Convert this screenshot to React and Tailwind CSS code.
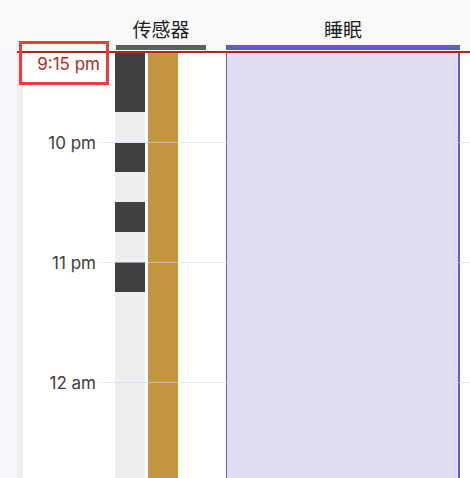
const HOURS = [
  { label: '10 pm', top: 91 },
  { label: '11 pm', top: 211 },
  { label: '12 am', top: 331 },
]

// sensor activity blocks, offsets from 9:15 pm at 2px per minute
const SENSOR_BLOCKS = [
  { top: 0, height: 60 },
  { top: 91, height: 29 },
  { top: 150, height: 30 },
  { top: 210, height: 30 },
]

const sans = { fontFamily: 'Inter, "Noto Sans CJK SC", sans-serif' }

function ColumnHeader({ title, width, bar }) {
  return (
    <div className="flex flex-col items-center justify-end" style={{ width }}>
      <span className="text-[19px] leading-none text-[#1c1c1c] mb-[5px]">{title}</span>
      <div className={`h-[5px] w-full ${bar}`} />
    </div>
  )
}

export default function App() {
  return (
    <div
      className="relative w-[470px] h-[478px] overflow-hidden bg-white"
      style={sans}
    >
      <header className="h-[51px] bg-[#f9f9f9] flex items-end pb-[1px]">
        <div className="w-[116px]" />
        <ColumnHeader title="传感器" width={90} bar="bg-[#5e5e5e]" />
        <div className="w-[20px]" />
        <ColumnHeader title="睡眠" width={234} bar="bg-[#6d55c4]" />
      </header>

      <div className="flex h-[427px]">
        <div className="w-[17px] bg-[#f7f8fc]" />
        <div className="w-[6px] bg-[#efefef]" />
        <div className="relative flex flex-1 pt-[1px] bg-white">
          {/* time axis */}
          <div className="relative w-[92px] shrink-0">
            <span className="absolute right-[15px] top-[4px] text-[17px] leading-none text-[#a3301f]">
              9:15 pm
            </span>
            {HOURS.map((h) => (
              <span
                key={h.label}
                className="absolute right-[19px] text-[17px] leading-none text-[#3d3d3d] -translate-y-1/2"
                style={{ top: h.top }}
              >
                {h.label}
              </span>
            ))}
          </div>

          {/* sensor track */}
          <div className="relative w-[30px] shrink-0 bg-[#eeeeee]">
            {SENSOR_BLOCKS.map((b, i) => (
              <div
                key={i}
                className="absolute inset-x-0 bg-[#404040]"
                style={{ top: b.top, height: b.height }}
              />
            ))}
          </div>
          <div className="w-[30px] shrink-0 ml-[3px] bg-[#c4963f]" />

          {/* sleep span */}
          <div className="w-[234px] shrink-0 ml-[48px] mt-[1px] bg-[#e0ddf0] border-l border-r-2 border-[#6e57c6]" />

          {/* hour grid */}
          {HOURS.map((h) => (
            <div
              key={h.label}
              className="absolute left-[77px] right-0 h-px bg-[#c7dbf3]/60"
              style={{ top: h.top }}
            />
          ))}
        </div>
      </div>

      {/* current time marker */}
      <div className="absolute left-[17px] right-0 top-[51px] h-[2px] bg-[#a52a1a]" />
      <div className="absolute left-[19px] top-[41px] w-[90px] h-[44px] border-[3px] border-[#f23a3a]" />
    </div>
  )
}
